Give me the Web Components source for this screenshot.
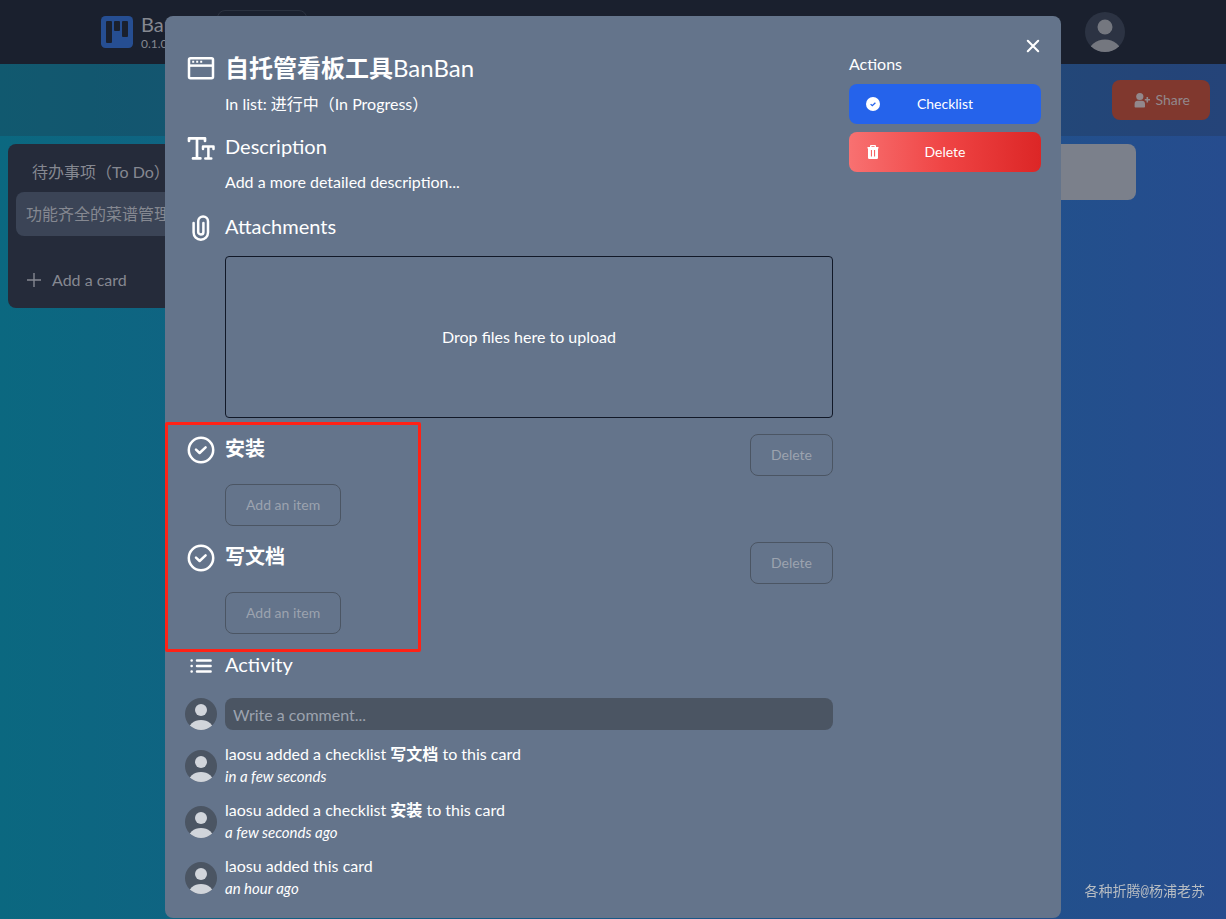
<!DOCTYPE html>
<html lang="zh-CN">
<head>
<meta charset="utf-8">
<title>BanBan</title>
<style>
  html, body { margin: 0; height: 100%; }
  body {
    font: 16px/24px Lato, "Noto Sans CJK SC", sans-serif;
    color: #fff;
    overflow: hidden;
  }
  .detail { padding-top: 8px; }
  .tall { line-height: 28px; }
</style>
</head>
<body>
<bb-board></bb-board>
<bb-card-dialog>
  <bb-section icon="window" size="large">
    <span slot="heading"><b>自托管看板工具</b>BanBan</span>
    <div class="detail">In list: 进行中（In Progress）</div>
  </bb-section>
  <bb-section icon="text">
    <span slot="heading">Description</span>
    <div class="detail tall">Add a more detailed description...</div>
  </bb-section>
  <bb-section icon="clip">
    <span slot="heading">Attachments</span>
    <bb-dropzone>Drop files here to upload</bb-dropzone>
  </bb-section>
  <bb-checklists>
    <bb-checklist name="安装"></bb-checklist>
    <bb-checklist name="写文档"></bb-checklist>
  </bb-checklists>
  <bb-section icon="list">
    <span slot="heading">Activity</span>
  </bb-section>
  <bb-comment></bb-comment>
  <bb-activity when="in a few seconds">laosu added a checklist <b>写文档</b> to this card</bb-activity>
  <bb-activity when="a few seconds ago">laosu added a checklist <b>安装</b> to this card</bb-activity>
  <bb-activity when="an hour ago">laosu added this card</bb-activity>
</bb-card-dialog>
<bb-watermark>各种折腾@杨浦老苏</bb-watermark>

<script>
const ICONS = {
  window: '<svg viewBox="0 0 32 32" fill="none" stroke="currentColor" stroke-width="2.5"><rect x="4" y="6.2" width="24" height="20" rx="1.5"/><path d="M4 13.6h24"/><path d="M7.2 9.7h2M11.2 9.7h2M15.200 9.7h2" stroke-width="2"/></svg>',
  text: '<svg viewBox="0 0 32 32" fill="none" stroke="currentColor" stroke-linejoin="round" stroke-linecap="round"><path d="M4 9V6.3h16V9M12 6.3v20M8 26.4h7.4" stroke-width="2.7"/><path d="M18 17v-2.6h10.5V17M23.4 14.4v12M20.3 26.4h6" stroke-width="2.5"/></svg>',
  clip: '<svg viewBox="0 0 32 32" fill="none" stroke="currentColor" stroke-width="2.5" stroke-linecap="round"><path d="M8.600 11v9.600a7.200 7.200 0 0 0 14.400 0V9.300a4.900 4.900 0 0 0-9.800 0v10.600a2.600 2.600 0 0 0 5.200 0V11"/></svg>',
  check: '<svg viewBox="0 0 32 32" fill="none" stroke="currentColor" stroke-width="2.5"><circle cx="16" cy="16" r="12.2"/><path d="M11 15.600l3.600 3.400 6-5.700" stroke-linecap="round" stroke-linejoin="round"/></svg>',
  list: '<svg viewBox="0 0 32 32" fill="currentColor" stroke="currentColor" stroke-width="2.5" stroke-linecap="round"><path d="M12 10.600h13.600M12 16h13.600M12 21.400h13.600M6.600 10.600h.1M6.600 16h.1M6.600 21.400h.1"/></svg>',
  close: '<svg viewBox="0 0 32 32" fill="none" stroke="currentColor" stroke-width="2.1" stroke-linecap="round"><path d="M10.800 10.800l10.400 10.400M21.200 10.800L10.800 21.200"/></svg>',
  badge: '<svg viewBox="0 0 16 16"><circle cx="8" cy="8" r="7" fill="#fff"/><path d="M5.6 8.1l1.7 1.6 3.1-3" fill="none" stroke="#2563eb" stroke-width="1.3"/></svg>',
  trash: '<svg viewBox="0 0 16 16" fill="currentColor" fill-rule="evenodd"><path d="M5 3V1.900q0-.9.900-.9h4.200q.9 0 .9.900V3h2.500v1.500H13V13.800q0 1.200-1.200 1.200H4.200Q3 15 3 13.800V4.500h-.500V3zM6.400 3h3.200v-.7H6.400zM5.900 6v6.500h1.100V6zM9 6v6.500h1.100V6z"/></svg>',
  share: '<svg viewBox="0 0 16 16" fill="currentColor"><circle cx="5.8" cy="4.500" r="3.600"/><path d="M.6 15v-3c0-2 1.200-3.200 3-3.200H8c1.800 0 3 1.200 3 3.200v3q-.2.400-.8.400H1.400q-.7 0-.8-.4z"/><path d="M12.500 5h1.600v1.900H16v1.600h-1.900v1.900h-1.600V8.500h-1.700V6.900h1.700z"/></svg>',
  plus: '<svg viewBox="0 0 16 16" fill="none" stroke="currentColor" stroke-width="1.4"><path d="M8 1v14M1 8h14"/></svg>',
  logo: '<svg viewBox="0 0 32 32"><rect width="32" height="32" rx="4.500" fill="#264e92"/><g fill="#1a202e"><rect x="5" y="5" width="6" height="22" rx="1"/><rect x="13" y="5" width="6" height="10" rx="1"/><rect x="21" y="5" width="6" height="16" rx="1"/></g></svg>'
};

function define(name, render) {
  customElements.define(name, class extends HTMLElement {
    connectedCallback() {
      if (this.shadowRoot) return;
      const t = document.createElement('template');
      t.innerHTML = render(this);
      this.attachShadow({ mode: 'open' }).append(t.content.cloneNode(true));
    }
  });
}

define('bb-icon', el => `
  <style>:host{display:block;flex:none;width:32px;height:32px}svg{display:block;width:100%;height:100%}</style>
  ${ICONS[el.getAttribute('name')]}`);

define('bb-avatar', () => `
  <style>:host{display:block;flex:none;width:32px;height:32px;border-radius:50%;overflow:hidden;
    background:var(--avatar-bg,#4b5563);color:var(--avatar-fg,#d1d5db)}svg{display:block;width:100%}</style>
  <svg viewBox="0 0 32 32" fill="currentColor"><circle cx="16" cy="12" r="6"/><ellipse cx="16" cy="33" rx="13" ry="11"/></svg>`);

define('bb-section', el => `
  <style>
    :host{display:grid;grid-template-columns:32px minmax(0,1fr);column-gap:8px}
    h2{margin:0;font-weight:400;font-size:20px;line-height:28px}
    :host([size=large]) h2{font-size:24px;line-height:32px}
  </style>
  <bb-icon name="${el.getAttribute('icon')}"></bb-icon>
  <div><h2><slot name="heading"></slot></h2><slot></slot></div>`);

define('bb-dropzone', () => `
  <style>
    :host{display:block;margin-top:16px}
    button{display:block;width:100%;height:162px;border:1px solid #111827;border-radius:4px;background:none;color:inherit;font:inherit}
  </style>
  <button type="button"><slot></slot></button>`);

define('bb-checklists', () => `
  <style>
    :host{display:grid;gap:16px;position:relative}
    .mark{position:absolute;top:-12px;bottom:-18px;left:-20px;width:256px;box-sizing:border-box;border:3px solid #ff2216;border-radius:2px;pointer-events:none}
  </style>
  <slot></slot><div class="mark"></div>`);

define('bb-checklist', el => `
  <style>
    :host{display:grid;grid-template-columns:32px minmax(0,1fr) auto;gap:8px}
    h2{margin:0;font-size:20px;line-height:28px}
    button{height:42px;padding:0 20px;border:1px solid #4b5563;border-radius:8px;background:none;color:#9ca3af;font:inherit;font-size:14px;line-height:20px}
    .add{grid-column:2;justify-self:start}
  </style>
  <bb-icon name="check"></bb-icon>
  <h2>${el.getAttribute('name')}</h2>
  <button type="button">Delete</button>
  <button type="button" class="add">Add an item</button>`);

define('bb-comment', () => `
  <style>
    :host{display:flex;gap:8px}
    input{flex:1;min-width:0;box-sizing:border-box;height:32px;padding:0 8px;border:0;border-radius:8px;background:#4b5563;color:#fff;font:inherit}
    input::placeholder{color:#9ca3af;opacity:1}
  </style>
  <bb-avatar></bb-avatar>
  <input type="text" aria-label="Write a comment" placeholder="Write a comment...">`);

define('bb-activity', el => `
  <style>
    :host{display:flex;gap:8px;margin-top:-4px}
    bb-avatar{margin-top:8px}
    p{margin:0}
    .when{display:block;font-size:15px;line-height:20px;font-style:italic}
  </style>
  <bb-avatar></bb-avatar>
  <div><p><slot></slot></p><time class="when">${el.getAttribute('when')}</time></div>`);

define('bb-action', el => `
  <style>
    :host{display:block}
    button{position:relative;display:flex;align-items:center;justify-content:center;width:100%;height:40px;border:0;border-radius:8px;padding:0 16px;color:#fff;font:inherit;font-size:14px;background:#2563eb}
    :host([danger]) button{background:linear-gradient(to right,#f87171,#ef4444,#dc2626)}
    bb-icon{position:absolute;left:16px;width:16px;height:16px}
  </style>
  <button type="button"><bb-icon name="${el.getAttribute('icon')}"></bb-icon><slot></slot></button>`);

define('bb-card-dialog', () => `
  <style>
    :host{position:fixed;inset:0;display:flex;justify-content:center;align-items:flex-start;padding:16px;overflow:hidden}
    [role=dialog]{position:relative;box-sizing:border-box;width:100%;max-width:896px;padding:36px 20px 20px;border-radius:8px;background:#64748b;display:grid;grid-template-columns:minmax(0,1fr) 192px;gap:16px}
    main{display:grid;gap:16px}
    aside{display:grid;gap:8px;align-content:start}
    .close{position:absolute;top:14px;right:12px;width:32px;height:32px;padding:0;border:0;background:none;color:#fff}
  </style>
  <div role="dialog" aria-label="Card">
    <button type="button" class="close" aria-label="Close"><bb-icon name="close"></bb-icon></button>
    <main><slot></slot></main>
    <aside>
      <div>Actions</div>
      <bb-action icon="badge">Checklist</bb-action>
      <bb-action icon="trash" danger>Delete</bb-action>
    </aside>
  </div>`);

define('bb-list', () => `
  <style>
    :host{display:block;box-sizing:border-box;padding:8px;border-radius:8px;background:#252b3a;color:#858891}
    h3{margin:0;padding:8px 16px;font-size:16px;line-height:24px;font-weight:400}
    .card{padding:10px;border-radius:8px;background:#3b4456;white-space:nowrap;overflow:hidden}
    button{display:flex;align-items:center;gap:10px;margin:24px 0 0;padding:8px 10px;border:0;background:none;color:inherit;font:inherit}
    bb-icon{width:16px;height:16px}
  </style>
  <h3>待办事项（To Do）</h3>
  <div class="card">功能齐全的菜谱管理</div>
  <button type="button"><bb-icon name="plus"></bb-icon>Add a card</button>`);

define('bb-board', () => `
  <style>
    :host{display:flex;flex-direction:column;height:100%;background:linear-gradient(to right,#0b6880,#264c8e);color:#858891}
    header{display:flex;align-items:center;height:64px;padding:0 101px;background:#1a202e}
    .logo{margin-right:8px}
    .name{font-size:20px;line-height:24px}
    .version{font-size:12px;line-height:16px}
    .boards{align-self:flex-start;width:90px;height:44px;margin:10px 0 0 8px;border:1px solid #2b3240;border-radius:8px;background:none}
    bb-avatar{width:40px;height:40px;margin-left:auto;--avatar-bg:#2c3343;--avatar-fg:#74777f}
    .bar{display:flex;justify-content:flex-end;align-items:flex-start;height:56px;padding:16px 16px 0;background:rgba(36,43,58,.25)}
    .share{display:flex;align-items:center;gap:6px;height:40px;padding:0 20px 0 22px;border:0;border-radius:8px;background:#80382e;color:#92888c;font:inherit;font-size:14px}
    .share bb-icon{width:16px;height:16px}
    .lists{display:grid;grid-template-columns:repeat(4,276px);align-items:start;gap:8px;padding:8px}
    .new{grid-column:4;height:56px;border:0;border-radius:8px;background:#7b808b}
  </style>
  <header>
    <bb-icon class="logo" name="logo"></bb-icon>
    <div><div class="name">BanBan</div><div class="version">0.1.0</div></div>
    <button type="button" class="boards" aria-label="Boards"></button>
    <bb-avatar></bb-avatar>
  </header>
  <div class="bar"><button type="button" class="share"><bb-icon name="share"></bb-icon>Share</button></div>
  <div class="lists">
    <bb-list></bb-list>
    <button type="button" class="new" aria-label="Add another list"></button>
  </div>`);

define('bb-watermark', () => `
  <style>:host{position:fixed;right:21px;bottom:17px;font:14px/20px "Liberation Mono","Noto Sans CJK SC",monospace;color:#b7bcc2}</style><slot></slot>`);
</script>
</body>
</html>
